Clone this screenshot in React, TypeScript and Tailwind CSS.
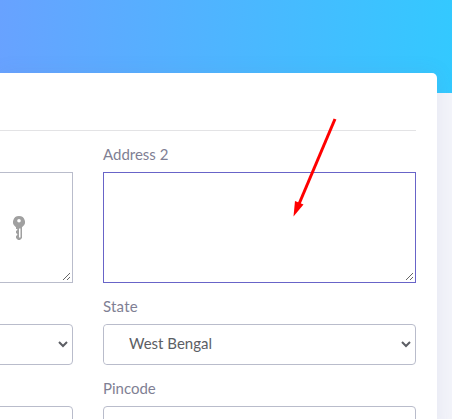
const label = "relative block h-[17px] text-[15px] leading-[17px] text-[#7f7f94]";
const frame = "h-[41px] rounded border border-[#b9bccb] bg-white pr-px";
const select = "block h-[39px] w-full rounded border-0 bg-white pb-[3px] text-[15px] text-[#5c5e64] outline-none";
const input = "block h-[41px] w-full rounded border border-[#b9bccb] bg-white outline-none";
const areaFrame = "h-[111px] border bg-white pr-px pb-px";
const area = "block h-[108px] w-full resize border-0 bg-white outline-none";

function KeyIcon() {
  return (
    <svg width="12" height="24" viewBox="0 0 12 24" className="pointer-events-none absolute left-[22px] top-[43px]" aria-hidden="true">
      <path fill="#a0a0a0" fillRule="evenodd" d="M6 0a6 6 0 0 1 3 11.200V22L7 24H5L3 22V20L4.300 19V18L3 17V15L4.300 14V13H3V11.200A6 6 0 0 1 6 0ZM6 3a1.800 1.800 0 1 0 0 3.600A1.800 1.800 0 0 0 6 3ZM6 12.500V21.500H7.500V12.500Z" />
    </svg>
  );
}

export default function App() {
  return (
    <div className="h-[419px] w-[452px] overflow-hidden bg-[#f3f4fa] font-[Lato,sans-serif]">
      <header className="h-[93px] bg-[linear-gradient(93deg,#68a2ff_0%,#33c9ff_100%)]" />
      <main className="relative -mt-5 mr-[15px] h-[360px] rounded-tr-[5px] bg-white pr-[21px] shadow-[0_0_20px_rgba(110,120,165,0.1)]">
        <div className="h-[58px] border-b border-[#e3e3e5]" />
        <form className="-ml-[10px] grid grid-cols-[83px_313px] gap-x-[30px]">
          <div className="pt-[41px]">
            <div className={`relative ${areaFrame} border-[#b9bccb]`}>
              <textarea aria-label="Address 1" className={area} />
              <KeyIcon />
            </div>
            <div className={`${frame} mt-[41px]`}>
              <select aria-label="Country" className={select}><option></option></select>
            </div>
            <input aria-label="City" className={`${input} mt-[41px]`} />
          </div>
          <div className="pt-[15px]">
            <label className={label}>Address 2</label>
            <div className={`${areaFrame} mt-[9px] border-[#6864c8]`}>
              <textarea aria-label="Address 2" className={area} />
            </div>
            <label className={`${label} mt-[15px] tracking-[0.2px]`}>State</label>
            <div className={`${frame} mt-[9px]`}>
              <select aria-label="State" className={`${select} pl-[21px]`}><option>West Bengal</option></select>
            </div>
            <label className={`${label} mt-[15px]`}>Pincode</label>
            <input aria-label="Pincode" className={`${input} mt-[9px]`} />
          </div>
        </form>
        <svg className="pointer-events-none absolute left-[290px] top-[42px]" width="50" height="105" viewBox="290 115 50 105" aria-hidden="true">
          <path d="M335 119L299 204" stroke="#ff0000" strokeWidth="3" />
          <path d="M293.500 216.500L295 201L303.500 204.500Z" fill="#ff0000" />
        </svg>
      </main>
    </div>
  );
}
